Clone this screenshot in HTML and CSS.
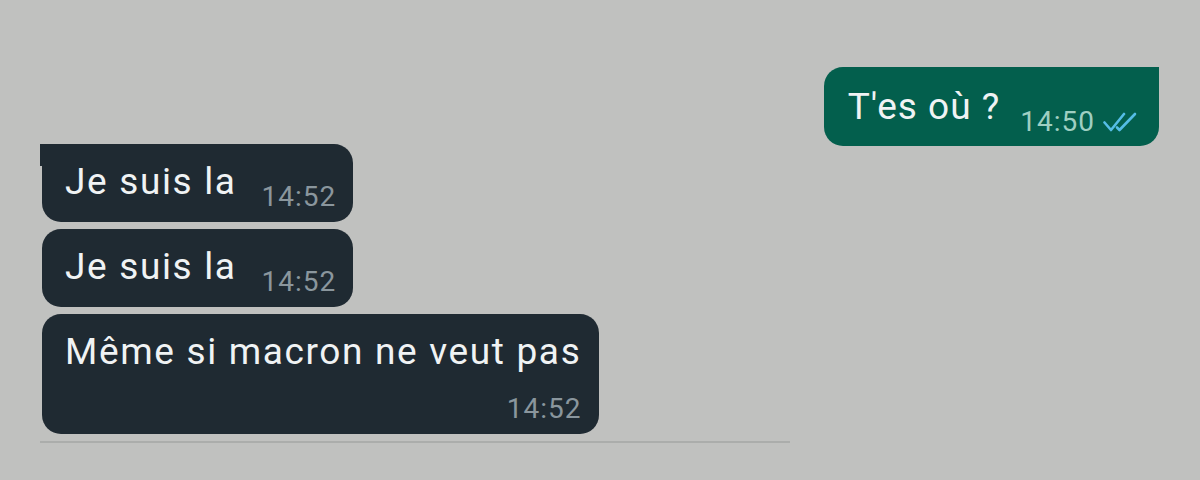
FILE: index.html
```html
<!DOCTYPE html>
<html lang="fr">
<head>
    <meta charset="UTF-8">
    <meta name="viewport" content="width=device-width, initial-scale=1.0">
    <title>Discussion</title>
    <link rel="stylesheet" href="styles.css">
</head>
<body>
    <div class="chat">
        <!-- messages reçus -->
        <div class="incoming">
            <div class="bubble in first">
                <span class="text">Je suis la</span>
                <span class="time">14:52</span>
            </div>
            <div class="bubble in">
                <span class="text">Je suis la</span>
                <span class="time">14:52</span>
            </div>
            <div class="bubble in long">
                <span class="text">Même si macron ne veut pas</span>
                <span class="time">14:52</span>
            </div>
        </div>

        <!-- message envoyé -->
        <div class="outgoing">
            <div class="bubble out">
                <span class="text">T'es où ?</span>
                <span class="time">14:50
                    <svg class="ticks" width="34" height="20" viewBox="0 0 34 20">
                        <path d="M1.5 10.5 L8 18 L21 2" />
                        <path d="M14 15.5 L16.5 18 L32 2" />
                    </svg>
                </span>
            </div>
        </div>
    </div>
</body>
</html>
```

FILE: styles.css
```css
body {
    margin: 0;
    background: #c0c1bf;
    font-family: Roboto, "Noto Sans", sans-serif;
    height: 480px;
    overflow: hidden;
}
.chat {
    display: grid;
    grid-template-columns: 750px 1fr;
    padding: 0 41px 0 40px;
}
.incoming {
    display: flex;
    flex-direction: column;
    align-items: flex-start;
    gap: 7px;
    padding-top: 144px;
    padding-bottom: 7px;
    border-bottom: 2px solid #abadab;
    align-self: start;
}
.outgoing {
    display: flex;
    justify-content: flex-end;
    align-items: flex-start;
    padding-top: 67px;
}
.bubble {
    display: flex;
    align-items: flex-start;
    gap: 25px;
    padding: 16px 17px 9px 23px;
    border-radius: 19px;
    color: #f0f3f4;
    position: relative;
}
.bubble .text {
    font-size: 37px;
    line-height: 44px;
    letter-spacing: 1.65px;
}
.bubble .time {
    font-size: 28px;
    line-height: 32px;
    letter-spacing: 1px;
    margin-top: 21px;
    display: flex;
    align-items: center;
    gap: 8px;
}
.in {
    background: #1f2a32;
    margin-left: 2px;
}
.in .time {
    color: #8a969d;
}
.in.first {
    border-top-left-radius: 0;
}
.in.first::before {
    content: "";
    position: absolute;
    left: -2px;
    top: 0;
    width: 2px;
    height: 22px;
    background: #1f2a32;
}
.long {
    flex-direction: column;
    align-items: stretch;
    gap: 0;
    padding-right: 18px;
    padding-bottom: 9px;
}
.long .time {
    align-self: flex-end;
    margin-top: 19px;
}
.out {
    background: #035f4d;
    border-top-right-radius: 0;
    padding: 18px 22px 8px 24px;
    gap: 20px;
}
.out .text {
    letter-spacing: 1px;
}
.out .time {
    color: #9fcfc2;
    margin-top: 21px;
}
.ticks {
    fill: none;
    stroke: #55bde6;
    stroke-width: 2.6;
    stroke-linecap: round;
    stroke-linejoin: round;
}
```
